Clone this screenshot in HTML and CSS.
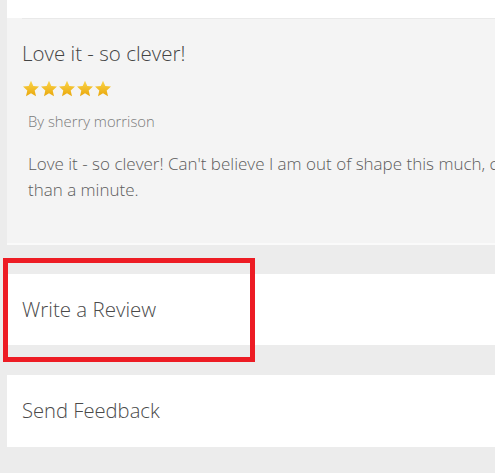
FILE: index.html
```html
<!DOCTYPE html>
<html>
<head>
<meta charset="utf-8">
<link rel="stylesheet" href="styles.css">
</head>
<body>
<div class="page">
  <div class="top-block"></div>
  <section class="review">
    <div class="review-inner">
      <h2 class="review-title">Love it - so clever!</h2>
      <div class="stars">
        <svg width="90" height="18" viewBox="0 0 90 18">
          <defs>
            <linearGradient id="g" x1="0" y1="0" x2="0" y2="1">
              <stop offset="0" stop-color="#fbd54a"/>
              <stop offset="1" stop-color="#e9a70b"/>
            </linearGradient>
            <path id="s" d="M9 0.8 L11.3 6.1 L17 6.6 L12.7 10.4 L14 16.2 L9 13.2 L4 16.2 L5.3 10.4 L1 6.6 L6.7 6.1 Z"/>
          </defs>
          <use href="#s" x="0" fill="url(#g)"/>
          <use href="#s" x="18" fill="url(#g)"/>
          <use href="#s" x="36" fill="url(#g)"/>
          <use href="#s" x="54" fill="url(#g)"/>
          <use href="#s" x="72" fill="url(#g)"/>
        </svg>
      </div>
      <div class="author">By sherry morrison</div>
      <p class="review-body">Love it - so clever! Can't believe I am out of shape this much, could not hold it for more<br>than a minute.</p>
    </div>
  </section>
  <div class="action-card highlighted">Write a Review</div>
  <div class="action-card">Send Feedback</div>
</div>
</body>
</html>
```

FILE: styles.css
```css
html, body {
  margin: 0;
  padding: 0;
  background: #ececec;
  overflow: hidden;
}
.page {
  padding-left: 7px;
  font-family: "Open Sans", "Liberation Sans", sans-serif;
  font-weight: 300;
  width: 488px;
}
.top-block {
  height: 18px;
  background: #fff;
}
.review {
  background: #f4f4f4;
  border-bottom: 2px solid #fafafa;
  overflow: hidden;
}
.review-inner {
  margin-left: 15px;
  border-top: 1px solid #e9e9e9;
  height: 225px;
  box-sizing: border-box;
}
.review-title {
  margin: 0;
  padding-top: 21px;
  font-size: 20.5px;
  line-height: 26px;
  font-weight: 300;
  color: #444;
}
.stars {
  margin-top: 14px;
  height: 18px;
  line-height: 0;
}
.author {
  margin-top: 14px;
  margin-left: 6px;
  font-size: 14.8px;
  line-height: 18px;
  color: #7a7a7a;
}
.review-body {
  margin: 21px 0 0 6px;
  font-size: 17px;
  line-height: 26px;
  color: #5c5c5c;
  white-space: nowrap;
}
.action-card {
  position: relative;
  background: #fff;
  height: 71px;
  margin-top: 29px;
  padding-left: 15px;
  display: flex;
  align-items: center;
  font-size: 20.5px;
  color: #4a4a4a;
  padding-bottom: 2px;
  box-sizing: border-box;
}
.action-card + .action-card {
  margin-top: 30px;
  height: 72px;
  font-size: 20.2px;
  padding-bottom: 3px;
}
.highlighted::after {
  content: "";
  position: absolute;
  left: -4px;
  top: -16px;
  width: 242px;
  height: 94px;
  border: 5px solid #ed1c24;
}
```
